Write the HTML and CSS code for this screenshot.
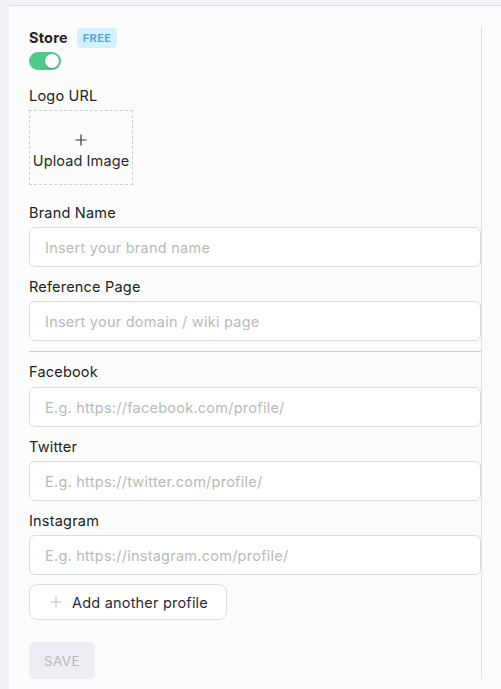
FILE: index.html
```html
<!DOCTYPE html>
<html>
<head>
<meta charset="utf-8">
<link rel="stylesheet" href="styles.css">
</head>
<body>
<div class="panel">
  <form class="form">
    <div class="store-row">
      <span class="store-label">Store</span>
      <span class="badge">FREE</span>
    </div>
    <div class="toggle"><span class="knob"></span></div>

    <label class="label logo-label">Logo URL</label>
    <div class="upload">
      <svg class="plus" width="12" height="12" viewBox="0 0 12 12"><path d="M6 0.5V11.5M0.5 6H11.5" stroke="#333" stroke-width="1.2" fill="none"/></svg>
      <span class="upload-text">Upload Image</span>
    </div>

    <div class="field first">
      <label class="label">Brand Name</label>
      <div class="input">Insert your brand name</div>
    </div>
    <div class="field">
      <label class="label">Reference Page</label>
      <div class="input">Insert your domain / wiki page</div>
    </div>

    <hr class="sep">

    <div class="field after-sep">
      <label class="label">Facebook</label>
      <div class="input">E.g. https://facebook.com/profile/</div>
    </div>
    <div class="field">
      <label class="label">Twitter</label>
      <div class="input">E.g. https://twitter.com/profile/</div>
    </div>
    <div class="field">
      <label class="label">Instagram</label>
      <div class="input">E.g. https://instagram.com/profile/</div>
    </div>

    <div class="add-btn">
      <svg width="12" height="12" viewBox="0 0 12 12"><path d="M6 0.5V11.5M0.5 6H11.5" stroke="#bbb" stroke-width="1" fill="none"/></svg>
      <span>Add another profile</span>
    </div>

    <div class="save">SAVE</div>
  </form>
</div>
</body>
</html>
```
FILE: styles.css
```css
* { box-sizing: border-box; }
html, body { margin: 0; padding: 0; }
body {
  background: #f2f3f6;
  font-family: Inter, "Open Sans", sans-serif;
  color: #222;
  font-size: 14px;
  padding-top: 5px;
  padding-left: 9px;
  height: 689px;
  overflow: hidden;
}
.panel {
  background: #fcfcfc;
  border-top: 1px solid #dedfe2;
  height: 684px;
  padding: 20px 19px 0 20px;
}
.form {
  width: 453px;
  border-right: 1px solid #e2e2e2;
  display: flex;
  flex-direction: column;
  align-items: flex-start;
  height: 653px;
}
.store-row {
  display: flex;
  align-items: center;
  gap: 9px;
  height: 22px;
}
.store-label { font-weight: 700; font-size: 14.5px; color: #1f1f1f; letter-spacing: 0.2px; }
.badge {
  background: #d3f1fc;
  color: #52abd1;
  font-weight: 700;
  font-size: 11px;
  letter-spacing: 0.4px;
  height: 20px;
  padding: 0 6px;
  border-radius: 4px;
  display: flex;
  align-items: center;
  margin-top: 2px;
}
.toggle {
  margin-top: 4px;
  width: 32px;
  height: 18px;
  border-radius: 9px;
  background: #51c98b;
  position: relative;
}
.knob {
  position: absolute;
  right: 2px;
  top: 2px;
  width: 14px;
  height: 14px;
  border-radius: 50%;
  background: #fff;
  box-shadow: 0 1px 2px rgba(0,0,0,0.2);
}
.label {
  display: block;
  font-size: 14.5px;
  letter-spacing: 0.2px;
  line-height: 21px;
  color: #222;
}
.logo-label { margin-top: 15px; }
.upload {
  margin-top: 4px;
  width: 104px;
  height: 75px;
  border: 1px dashed #cfcfcf;
  display: flex;
  flex-direction: column;
  align-items: center;
  justify-content: center;
  gap: 6px;
  padding-top: 9px;
}
.upload-text { font-size: 14.5px; letter-spacing: 0.1px; color: #2a2a2a; line-height: 18px; white-space: nowrap; }
.field {
  width: 100%;
  margin-top: 9px;
  display: flex;
  flex-direction: column;
  gap: 4px;
}
.field.first { margin-top: 17px; }
.field.after-sep { gap: 5px; }
.input {
  width: 100%;
  height: 40px;
  background: #fff;
  border: 1px solid #dcdcdc;
  border-radius: 6px;
  padding: 0 15px;
  display: flex;
  align-items: center;
  color: #b9b9b9;
  font-size: 14.5px;
  letter-spacing: 0.25px;
}
.sep {
  width: 100%;
  border: 0;
  border-top: 1px solid #cfcfcf;
  margin: 10px 0 0 0;
}
.add-btn {
  margin-top: 9px;
  width: 198px;
  height: 36px;
  border: 1px solid #dcdde3;
  border-radius: 8px;
  background: #fff;
  display: flex;
  align-items: center;
  gap: 10px;
  padding-left: 20px;
  color: #2a2a3a;
  font-size: 14.5px;
  letter-spacing: 0.2px;
}
.save {
  margin-top: 22px;
  width: 66px;
  height: 37px;
  background: #eceef3;
  border-radius: 5px;
  color: #b8b8bd;
  font-size: 13.5px;
  display: flex;
  align-items: center;
  justify-content: center;
  letter-spacing: 0.4px;
}
```
